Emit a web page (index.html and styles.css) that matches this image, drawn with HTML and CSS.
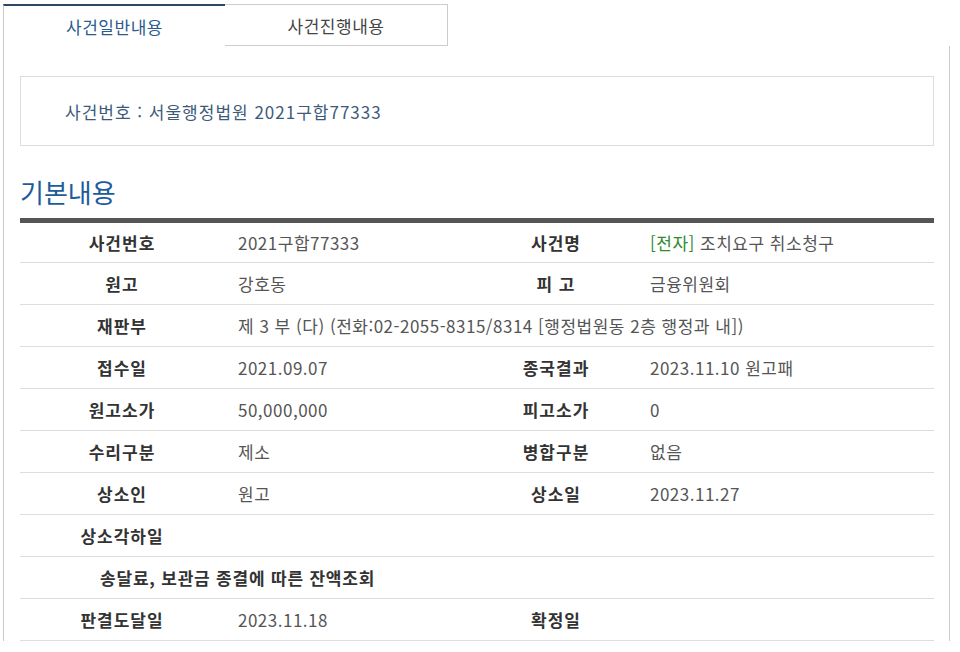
FILE: index.html
```html
<!DOCTYPE html>
<html lang="ko">
  <head>
    <meta charset="UTF-8" />
    <meta name="viewport" content="width=device-width, initial-scale=1.0" />
    <title>사건일반내용</title>
    <link rel="stylesheet" href="styles.css">
  </head>
  <body>
    <div class="page">
      <div class="tabs">
        <div class="tab on">사건일반내용</div>
        <div class="tab">사건진행내용</div>
      </div>

      <div class="panel">
        <div class="caseBox">사건번호 : 서울행정법원 2021구합77333</div>

        <h3 class="title">기본내용</h3>

        <table class="info">
          <colgroup>
            <col class="c1" />
            <col class="c2" />
            <col class="c3" />
            <col />
          </colgroup>
          <tr>
            <th>사건번호</th>
            <td>2021구합77333</td>
            <th>사건명</th>
            <td><span class="green">[전자]</span> 조치요구 취소청구</td>
          </tr>
          <tr>
            <th>원고</th>
            <td>강호동</td>
            <th>피 고</th>
            <td>금융위원회</td>
          </tr>
          <tr>
            <th>재판부</th>
            <td colspan="3">제 3 부 (다) (전화:02-2055-8315/8314 [행정법원동 2층 행정과 내])</td>
          </tr>
          <tr>
            <th>접수일</th>
            <td>2021.09.07</td>
            <th>종국결과</th>
            <td>2023.11.10 원고패</td>
          </tr>
          <tr>
            <th>원고소가</th>
            <td>50,000,000</td>
            <th>피고소가</th>
            <td>0</td>
          </tr>
          <tr>
            <th>수리구분</th>
            <td>제소</td>
            <th>병합구분</th>
            <td>없음</td>
          </tr>
          <tr>
            <th>상소인</th>
            <td>원고</td>
            <th>상소일</th>
            <td>2023.11.27</td>
          </tr>
          <tr>
            <th>상소각하일</th>
            <td colspan="3"></td>
          </tr>
          <tr>
            <th colspan="4" class="wide">송달료, 보관금 종결에 따른 잔액조회</th>
          </tr>
          <tr>
            <th>판결도달일</th>
            <td>2023.11.18</td>
            <th>확정일</th>
            <td></td>
          </tr>
        </table>
      </div>
    </div>
  </body>
</html>
```

FILE: styles.css
```css
* {
  margin: 0;
  padding: 0;
  box-sizing: border-box;
}

body {
  font-family: "Noto Sans CJK KR", "Noto Sans", sans-serif;
  background-color: #fff;
  color: #555;
}

.page {
  width: 947px;
  margin-left: 3px;
  padding-top: 4px;
}

.tabs {
  display: flex;
  height: 42px;
}

.tab {
  width: 223px;
  display: flex;
  justify-content: center;
  align-items: center;
  font-size: 17px;
  letter-spacing: 0.5px;
  color: #444;
  border: 1px solid #ccc;
  border-left: none;
}

.tab.on {
  width: 222px;
  color: #2a5b8f;
  border: none;
  border-left: 1px solid #ccc;
  border-top: 2px solid #2b4766;
}

.panel {
  border-left: 1px solid #ccc;
  border-right: 1px solid #ccc;
  padding: 30px 15px 0 16px;
}

.caseBox {
  height: 70px;
  border: 1px solid #ddd;
  padding-left: 44px;
  display: flex;
  align-items: center;
  font-size: 17px;
  letter-spacing: 1px;
  color: #3d5a7a;
}

.title {
  margin-top: 28px;
  height: 44px;
  font-size: 26px;
  font-weight: normal;
  color: #1d5c9a;
  line-height: 36px;
}

.info {
  width: 100%;
  table-layout: fixed;
  border-collapse: collapse;
  border-top: 5px solid #555;
  font-size: 17px;
  letter-spacing: 0.5px;
}

.info .c1 {
  width: 204px;
}

.info .c2 {
  width: 252px;
}

.info .c3 {
  width: 160px;
}

.info th,
.info td {
  height: 42px;
  border-bottom: 1px solid #ddd;
  padding: 0;
  white-space: nowrap;
}

.info th {
  text-align: center;
  color: #333;
  font-weight: bold;
  letter-spacing: 1px;
}

.info td {
  padding-left: 14px;
  text-align: left;
}

.info th.wide {
  text-align: left;
  padding-left: 80px;
  letter-spacing: 0.8px;
}

.green {
  color: #2e8b2e;
}
```
